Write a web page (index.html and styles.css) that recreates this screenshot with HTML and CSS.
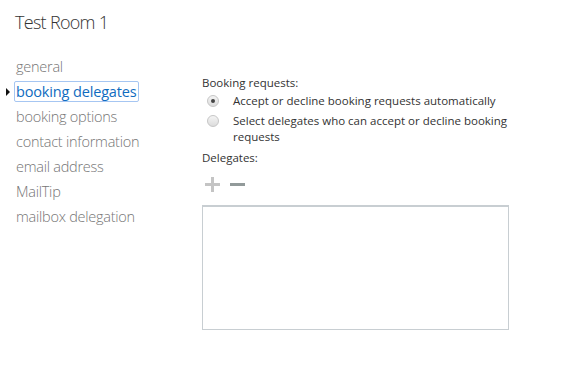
FILE: index.html
```html
<!DOCTYPE html>
<html lang="en">
<head>
    <meta charset="UTF-8">
    <title>Test Room 1</title>
    <link rel="stylesheet" href="styles.css">
</head>
<body>
    <div class="page">
        <h1 class="title">Test Room 1</h1>
        <div class="layout">
            <ul class="nav">
                <li><span>general</span></li>
                <li class="selected"><span>booking delegates</span></li>
                <li><span>booking options</span></li>
                <li><span>contact information</span></li>
                <li><span>email address</span></li>
                <li><span>MailTip</span></li>
                <li><span>mailbox delegation</span></li>
            </ul>
            <div class="content">
                <div class="label">Booking requests:</div>
                <div class="option">
                    <span class="radio checked"></span>
                    <span class="option-text">Accept or decline booking requests automatically</span>
                </div>
                <div class="option">
                    <span class="radio"></span>
                    <span class="option-text">Select delegates who can accept or decline booking requests</span>
                </div>
                <div class="label delegates">Delegates:</div>
                <div class="toolbar">
                    <svg width="15" height="15" viewBox="0 0 15 15">
                        <rect x="6" y="0" width="3" height="15" fill="#c4c4c4"/>
                        <rect x="0" y="6" width="15" height="3" fill="#c4c4c4"/>
                    </svg>
                    <svg width="15" height="15" viewBox="0 0 15 15">
                        <rect x="0" y="6" width="15" height="3" fill="#929a9a"/>
                    </svg>
                </div>
                <div class="listbox"></div>
            </div>
        </div>
    </div>
</body>
</html>
```

FILE: styles.css
```css
body {
    margin: 0;
    background-color: #fff;
    font-family: "Open Sans", "Noto Sans", sans-serif;
    color: #333;
}
.page {
    padding-top: 10px;
}
.title {
    margin: 0 0 0 15px;
    font-size: 18px;
    line-height: 24px;
    font-weight: 300;
    letter-spacing: -0.7px;
    color: #333;
}
.layout {
    display: flex;
    margin-top: 20px;
}
.nav {
    list-style: none;
    margin: 0;
    padding: 0 0 0 5px;
    width: 197px;
    font-size: 14.5px;
    letter-spacing: -0.25px;
    font-weight: 300;
    color: #757575;
}
.nav li {
    display: flex;
    align-items: center;
    height: 25px;
}
.nav li::before {
    content: "";
    width: 9px;
}
.nav li span {
    border: 1px solid transparent;
    border-radius: 2px;
    padding: 0 1px;
    line-height: 19px;
}
.nav li.selected span {
    border-color: #a6c6f2;
    color: #0f6cc0;
    font-weight: 400;
    letter-spacing: -0.15px;
}
.nav li.selected::before {
    width: 0;
    height: 0;
    margin-left: 1px;
    margin-right: 4px;
    border-top: 4px solid transparent;
    border-bottom: 4px solid transparent;
    border-left: 4px solid #111;
}
.content {
    padding-top: 21px;
    width: 307px;
    font-size: 11.5px;
    line-height: 16px;
}
.option {
    display: flex;
    align-items: flex-start;
    margin-top: 2px;
    padding-left: 5px;
}
.option + .option {
    margin-top: 4px;
}
.radio {
    flex: none;
    width: 10px;
    height: 10px;
    margin-top: 2px;
    margin-right: 14px;
    border: 1px solid #c6c6c6;
    border-radius: 50%;
    background: linear-gradient(#f4f4f4, #dcdcdc);
    display: flex;
    align-items: center;
    justify-content: center;
}
.radio.checked::after {
    content: "";
    width: 4px;
    height: 4px;
    border-radius: 50%;
    background-color: #444;
}
.delegates {
    margin-top: 5px;
}
.toolbar {
    display: flex;
    gap: 10px;
    margin-top: 11px;
    padding-left: 3px;
    height: 15px;
}
.listbox {
    margin-top: 13px;
    height: 122px;
    border: 1px solid #c8ced2;
    border-top-width: 2px;
}
```
